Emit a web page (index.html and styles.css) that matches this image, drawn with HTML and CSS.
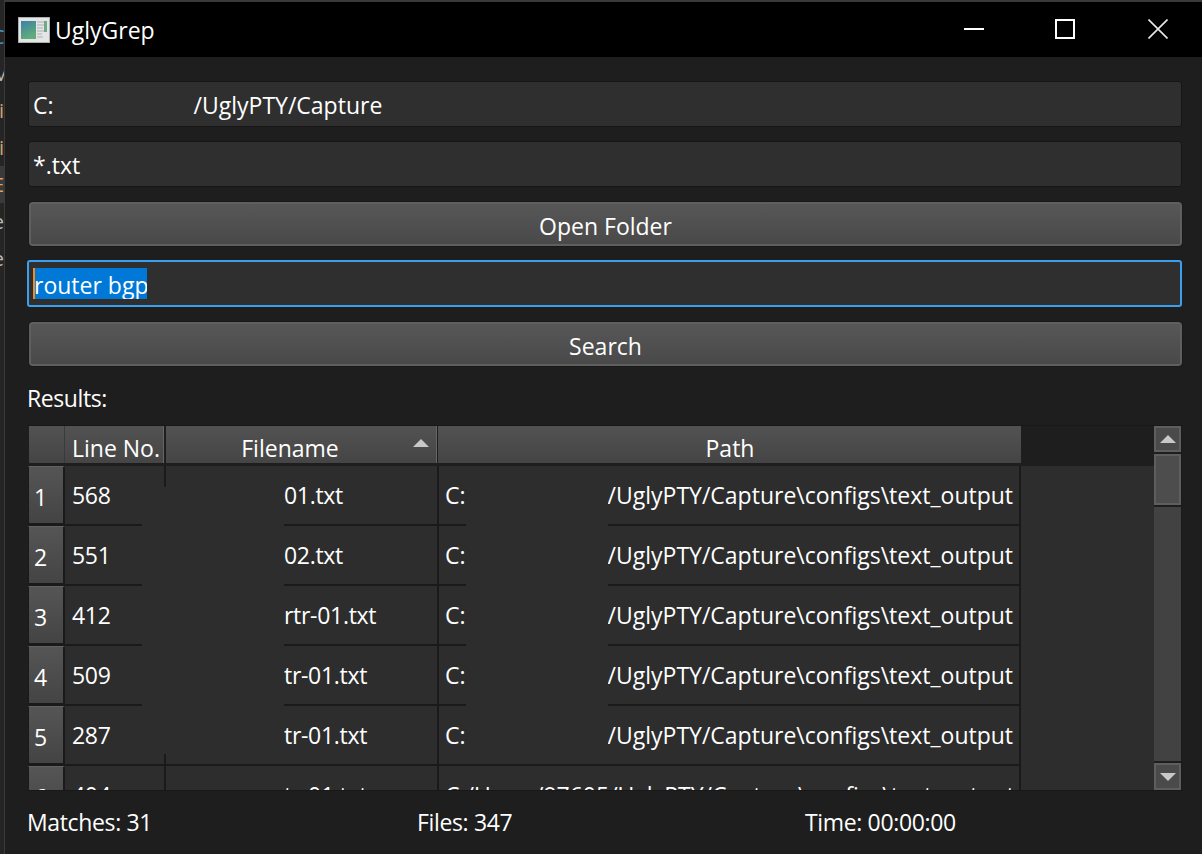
FILE: index.html
```html
<!DOCTYPE html>
<html lang="en">
<head>
	<meta charset="UTF-8">
	<title>UglyGrep</title>
	<link rel="stylesheet" href="styles.css">
</head>
<body>
	<div class="behind">
		<span class="peek blue">C</span>
		<span class="peek">M</span>
		<span class="peek tan">i</span>
		<span class="peek tan">i</span>
		<span class="peek tan hilite">E</span>
		<span class="peek">e</span>
		<span class="peek">e</span>
	</div>
	<div class="window">
		<div class="titlebar">
			<svg class="app_icon" width="32" height="26" viewBox="0 0 32 26">
				<defs>
					<linearGradient id="pane" x1="0" y1="0" x2="0.4" y2="1">
						<stop offset="0" stop-color="#3f7fa8"/>
						<stop offset="1" stop-color="#5fae7a"/>
					</linearGradient>
				</defs>
				<rect x="0.5" y="0.5" width="31" height="25" fill="#e4e6e6" stroke="#a9adad"/>
				<rect x="3" y="4" width="15" height="18" fill="url(#pane)"/>
				<path d="M19 5h7M19 8h7M19 11h6M19 14h7M19 17h5M19 20h6" stroke="#aab0b0"/>
				<rect x="26" y="4" width="3" height="11" fill="#6fa98a"/>
			</svg>
			<span class="app_name">UglyGrep</span>
			<div class="controls">
				<svg width="20" height="20" viewBox="0 0 20 20"><path d="M0 10h20" stroke="#fff" stroke-width="2"/></svg>
				<svg width="20" height="20" viewBox="0 0 20 20"><rect x="1" y="1" width="18" height="18" fill="none" stroke="#fff" stroke-width="2"/></svg>
				<svg class="btn_close" width="20" height="20" viewBox="0 0 20 20"><path d="M0.5 0.5L19.5 19.5M19.5 0.5L0.5 19.5" stroke="#e8e8e8" stroke-width="1.6"/></svg>
			</div>
		</div>
		<div class="content">
			<div class="field">C:<span class="gap_top"></span>/UglyPTY/Capture</div>
			<div class="field">*.txt</div>
			<div class="button">Open Folder</div>
			<div class="field focus"><span class="caret"></span><span class="selected">router bgp</span></div>
			<div class="button">Search</div>
			<div class="results_label">Results:</div>
			<div class="table_box">
				<div class="table_main">
					<div class="head_row">
						<div class="head corner"></div>
						<div class="head col_line">Line No.</div>
						<div class="head col_file">Filename<span class="sort"></span></div>
						<div class="head col_path">Path</div>
						<div class="head_empty"></div>
					</div>
					<div class="row">
						<div class="row_no">1</div>
						<div class="cell col_line">568</div>
						<div class="cell col_file">01.txt</div>
						<div class="cell col_path">C:<span class="gap_path"></span>/UglyPTY/Capture\configs\text_output</div>
						<div class="cell_empty"></div>
					</div>
					<div class="row">
						<div class="row_no">2</div>
						<div class="cell col_line">551</div>
						<div class="cell col_file">02.txt</div>
						<div class="cell col_path">C:<span class="gap_path"></span>/UglyPTY/Capture\configs\text_output</div>
						<div class="cell_empty"></div>
					</div>
					<div class="row">
						<div class="row_no">3</div>
						<div class="cell col_line">412</div>
						<div class="cell col_file">rtr-01.txt</div>
						<div class="cell col_path">C:<span class="gap_path"></span>/UglyPTY/Capture\configs\text_output</div>
						<div class="cell_empty"></div>
					</div>
					<div class="row">
						<div class="row_no">4</div>
						<div class="cell col_line">509</div>
						<div class="cell col_file">tr-01.txt</div>
						<div class="cell col_path">C:<span class="gap_path"></span>/UglyPTY/Capture\configs\text_output</div>
						<div class="cell_empty"></div>
					</div>
					<div class="row">
						<div class="row_no">5</div>
						<div class="cell col_line">287</div>
						<div class="cell col_file">tr-01.txt</div>
						<div class="cell col_path">C:<span class="gap_path"></span>/UglyPTY/Capture\configs\text_output</div>
						<div class="cell_empty"></div>
					</div>
					<div class="row">
						<div class="row_no">6</div>
						<div class="cell col_line">404</div>
						<div class="cell col_file">tr-01.txt</div>
						<div class="cell col_path">C:/Users/97605/UglyPTY/Capture\configs\text_output</div>
						<div class="cell_empty"></div>
					</div>
					<div class="patch patch_file"></div>
					<div class="patch patch_path"></div>
				</div>
				<div class="scrollbar">
					<div class="scroll_btn"><span class="arrow_up"></span></div>
					<div class="scroll_handle"></div>
					<div class="scroll_track"></div>
					<div class="scroll_btn btn_down"><span class="arrow_down"></span></div>
				</div>
			</div>
			<div class="status">
				<span class="stat">Matches: 31</span>
				<span class="stat">Files: 347</span>
				<span class="stat">Time: 00:00:00</span>
			</div>
		</div>
	</div>
</body>
</html>
```

FILE: styles.css
```css
*{
	margin: 0;
	padding: 0;
	box-sizing: border-box;
}
html,body{
	height: 100%;
	overflow: hidden;
}
body{
	display: flex;
	background-color: #252526;
	font-family: "Open Sans", "Liberation Sans", sans-serif;
	font-size: 23px;
	color: #fff;
}
.behind{
	width: 5px;
	flex: none;
	border-right: 1px solid #3a3a3a;
	padding-top: 18px;
	overflow: hidden;
	display: flex;
	flex-direction: column;
}
.peek{
	height: 37px;
	line-height: 37px;
	display: block;
	margin-left: -8px;
	width: 12px;
	text-align: right;
	font-size: 20px;
	color: #b9b9b9;
	flex: none;
}
.blue{
	color: #4a90c8;
}
.tan{
	color: #c9a76e;
}
.hilite{
	background-color: #3a3a3c;
	color: #d9a55c;
}
.window{
	flex: 1;
	display: flex;
	flex-direction: column;
	border-top: 2px solid #3a3a3a;
	background-color: #1e1e1e;
}
.titlebar{
	height: 55px;
	flex: none;
	background-color: #000;
	display: flex;
	align-items: center;
	padding-left: 13px;
}
.app_icon{
	flex: none;
	margin-top: 1px;
}
.app_name{
	margin-left: 5px;
}
.controls{
	margin-left: auto;
	display: flex;
	gap: 71px;
	padding-right: 34px;
	margin-top: -1px;
}
.btn_close{
	margin-left: 2px;
}
.content{
	flex: 1;
	display: flex;
	flex-direction: column;
	padding: 24px 20px 0 23px;
}
.field{
	height: 46px;
	line-height: 47px;
	background-color: #2f2f2f;
	border: 1px solid #161616;
	border-radius: 3px;
	padding-left: 4px;
	margin-bottom: 14px;
	display: flex;
	white-space: pre;
}
.gap_top{
	width: 140px;
}
.field.focus{
	border: 2px solid #3a9fef;
	margin-left: -1px;
	padding-left: 4px;
	padding-top: 6px;
	margin-bottom: 14px;
	height: 47px;
}
.caret{
	width: 2px;
	height: 31px;
	background-color: #f58a1f;
	flex: none;
}
.selected{
	background-color: #0078d7;
	height: 31px;
	width: 112px;
	line-height: 35px;
	text-indent: -1px;
	overflow: hidden;
}
.button{
	height: 44px;
	line-height: 44px;
	margin-top: 1px;
	margin-bottom: 14px;
	margin-left: 1px;
	text-align: center;
	border: 2px solid #5f5f5f;
	border-radius: 3px;
	outline: 1px solid #191919;
	background: linear-gradient(#575757, #494949);
}
.results_label{
	height: 45px;
	line-height: 36px;
	flex: none;
	margin-left: -1px;
	letter-spacing: -0.4px;
}
.table_box{
	height: 366px;
	flex: none;
	display: flex;
	border-top: 1px solid #181818;
	border-bottom: 1px solid #181818;
	overflow: hidden;
}
.table_main{
	flex: 1;
	position: relative;
	overflow: hidden;
	background-color: #2d2d2d;
}
.head_row{
	height: 40px;
	display: flex;
	background-color: #1e1e1e;
}
.head{
	height: 37px;
	line-height: 44px;
	text-align: center;
	background: linear-gradient(#525252, #454545);
	border-right: 1px solid #666;
	position: relative;
	white-space: nowrap;
}
.corner{
	width: 36px;
	margin-left: 1px;
	border-right: 1px solid #3a3a3a;
}
.head_empty{
	flex: 1;
}
.head.col_line{
	width: 99px;
	margin-right: 2px;
	padding-left: 4px;
}
.head.col_file{
	width: 271px;
	margin-right: 1px;
	padding-right: 22px;
}
.head.col_path{
	width: 583px;
	border-right: none;
	padding-left: 1px;
}
.sort{
	position: absolute;
	right: 7px;
	top: 13px;
	border-left: 8px solid transparent;
	border-right: 8px solid transparent;
	border-bottom: 8px solid #c8c8c8;
}
.row{
	height: 60px;
	display: flex;
	flex: none;
}
.row_no{
	width: 37px;
	height: 60px;
	padding-left: 5px;
	line-height: 60px;
	background: linear-gradient(#555, #444) padding-box;
	border-left: 1px solid #1a1a1a;
	border-right: 2px solid #1a1a1a;
	border-top: 1px solid #626262;
	border-bottom: 3px solid #1a1a1a;
	flex: none;
}
.cell{
	height: 60px;
	line-height: 58px;
	padding-left: 7px;
	border-right: 2px solid #1a1a1a;
	border-bottom: 2px solid #1a1a1a;
	white-space: nowrap;
	overflow: hidden;
	flex: none;
}
.cell.col_line{
	width: 101px;
	letter-spacing: -0.3px;
}
.cell.col_file{
	width: 273px;
	padding-left: 118px;
	letter-spacing: -0.3px;
}
.cell.col_path{
	width: 582px;
	padding-left: 6px;
}
.gap_path{
	display: inline-block;
	width: 142px;
}
.cell_empty{
	flex: 1;
}
.patch{
	position: absolute;
	background-color: #2d2d2d;
}
.patch_file{
	left: 114px;
	top: 61px;
	width: 142px;
	height: 267px;
}
.patch_path{
	left: 438px;
	top: 61px;
	width: 142px;
	height: 267px;
}
.scrollbar{
	width: 28px;
	flex: none;
	display: flex;
	flex-direction: column;
	gap: 2px;
	background-color: #1e1e1e;
	border-right: 1px solid #1a1a1a;
}
.scroll_btn{
	height: 26px;
	flex: none;
	background-color: #4a4a4a;
	border: 2px solid #5e5e5e;
	display: flex;
	align-items: center;
	justify-content: center;
}
.btn_down{
	height: 27px;
}
.scroll_handle{
	height: 51px;
	flex: none;
	background-color: #4d4d4d;
	border: 2px solid #5e5e5e;
}
.scroll_track{
	flex: 1;
	background-color: #424242;
}
.arrow_up{
	border-left: 8px solid transparent;
	border-right: 8px solid transparent;
	border-bottom: 8px solid #c8c8c8;
}
.arrow_down{
	border-left: 8px solid transparent;
	border-right: 8px solid transparent;
	border-top: 8px solid #c8c8c8;
}
.status{
	display: grid;
	grid-template-columns: 390px 388px 1fr;
	height: 62px;
	line-height: 62px;
	margin-left: -1px;
	letter-spacing: -0.35px;
}
```
